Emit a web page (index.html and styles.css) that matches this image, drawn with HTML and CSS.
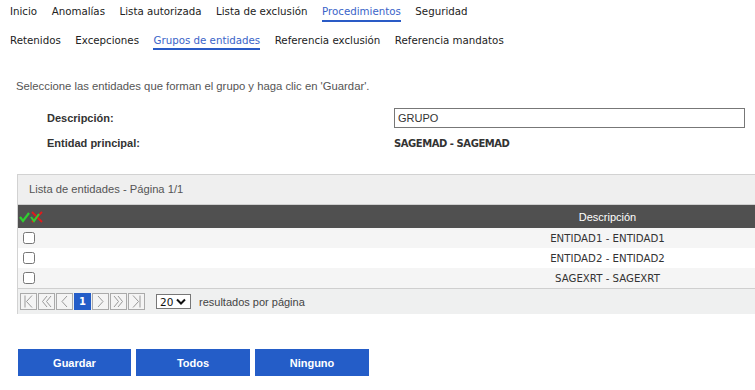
FILE: index.html
```html
<!DOCTYPE html>
<html lang="es">
<head>
  <meta charset="UTF-8">
  <title>Grupos de entidades</title>
  <link rel="stylesheet" href="styles.css">
</head>
<body>

<nav class="menu menu-top">
  <a href="#">Inicio</a>
  <a href="#">Anomalías</a>
  <a href="#">Lista autorizada</a>
  <a href="#">Lista de exclusión</a>
  <a href="#" class="active">Procedimientos</a>
  <a href="#">Seguridad</a>
</nav>

<nav class="menu menu-sub">
  <a href="#">Retenidos</a>
  <a href="#">Excepciones</a>
  <a href="#" class="active">Grupos de entidades</a>
  <a href="#">Referencia exclusión</a>
  <a href="#">Referencia mandatos</a>
</nav>

<p class="intro">Seleccione las entidades que forman el grupo y haga clic en 'Guardar'.</p>

<div class="form-grid">
  <label for="descripcion">Descripción:</label>
  <input type="text" id="descripcion" value="GRUPO">
  <span class="lbl">Entidad principal:</span>
  <span class="value">SAGEMAD - SAGEMAD</span>
</div>

<div class="panel">
  <div class="panel-title">Lista de entidades - Página 1/1</div>
  <table class="grid">
    <thead>
      <tr>
        <th class="col-check">
          <svg width="25" height="12" viewBox="0 0 25 12">
            <polyline points="1,6 4,10 10,2" fill="none" stroke="#2fd02f" stroke-width="2.2"/>
            <line x1="13" y1="1" x2="23" y2="11" stroke="#e01b1b" stroke-width="2"/>
            <line x1="13" y1="11" x2="23" y2="1" stroke="#e01b1b" stroke-width="2"/>
            <polyline points="12,6 15,10 20,3" fill="none" stroke="#2fd02f" stroke-width="2"/>
          </svg>
        </th>
        <th>Descripción</th>
      </tr>
    </thead>
    <tbody>
      <tr><td class="col-check"><input type="checkbox"></td><td>ENTIDAD1 - ENTIDAD1</td></tr>
      <tr><td class="col-check"><input type="checkbox"></td><td>ENTIDAD2 - ENTIDAD2</td></tr>
      <tr><td class="col-check"><input type="checkbox"></td><td>SAGEXRT - SAGEXRT</td></tr>
    </tbody>
  </table>
  <div class="pager">
    <div class="pages">
      <span class="pg">
        <svg width="11" height="13" viewBox="0 0 11 13"><path d="M2 0.5v12M9 0.5L3.5 6.5L9 12.5" fill="none" stroke="#999" stroke-width="1"/></svg>
      </span>
      <span class="pg">
        <svg width="11" height="13" viewBox="0 0 11 13"><path d="M6 1L1.5 6.5L6 12M10 1L5.5 6.5L10 12" fill="none" stroke="#999" stroke-width="1"/></svg>
      </span>
      <span class="pg">
        <svg width="11" height="13" viewBox="0 0 11 13"><path d="M8 1L3 6.5L8 12" fill="none" stroke="#999" stroke-width="1"/></svg>
      </span>
      <span class="pg current">1</span>
      <span class="pg">
        <svg width="11" height="13" viewBox="0 0 11 13"><path d="M3 1L8 6.5L3 12" fill="none" stroke="#999" stroke-width="1"/></svg>
      </span>
      <span class="pg">
        <svg width="11" height="13" viewBox="0 0 11 13"><path d="M1 1L5.5 6.5L1 12M5 1L9.5 6.5L5 12" fill="none" stroke="#999" stroke-width="1"/></svg>
      </span>
      <span class="pg">
        <svg width="11" height="13" viewBox="0 0 11 13"><path d="M2 0.5L7.5 6.5L2 12.5M9 0.5v12" fill="none" stroke="#999" stroke-width="1"/></svg>
      </span>
    </div>
    <div class="page-size">
      <span>20</span>
      <svg width="10" height="7" viewBox="0 0 10 7"><path d="M1 1.5L5 5.5L9 1.5" fill="none" stroke="#111" stroke-width="2"/></svg>
    </div>
    <span class="per-page">resultados por página</span>
  </div>
</div>

<div class="actions">
  <button type="button">Guardar</button>
  <button type="button">Todos</button>
  <button type="button">Ninguno</button>
</div>

</body>
</html>
```

FILE: styles.css
```css
body {
  margin: 0;
  background: #fff;
  font-family: "Liberation Sans", Arial, sans-serif;
  font-size: 11px;
  color: #333;
}
.menu {
  display: flex;
  gap: 14.5px;
  padding-left: 10px;
  font-family: "DejaVu Sans", Verdana, sans-serif;
  font-size: 10.25px;
}
.menu a {
  color: #222;
  text-decoration: none;
  line-height: 13px;
  padding-bottom: 2px;
  border-bottom: 2px solid transparent;
}
.menu a.active {
  color: #3a63c8;
  border-bottom-color: #2a5bc6;
}
.menu-top {
  padding-top: 5px;
}
.menu-sub {
  margin-top: 12px;
}
.menu-sub a {
  padding-bottom: 1px;
}
.intro {
  margin: 29px 0 0 16px;
  line-height: 14px;
  font-size: 11.3px;
  color: #555;
}
.form-grid {
  display: grid;
  grid-template-columns: 347px 351px;
  grid-auto-rows: 20px;
  row-gap: 5px;
  align-items: center;
  margin: 15px 0 0 47px;
}
.form-grid label,
.form-grid .lbl {
  font-weight: bold;
  color: #333;
}
.form-grid input {
  box-sizing: border-box;
  height: 20px;
  width: 100%;
  margin: 0;
  padding: 0 3px;
  border: 1px solid #777;
  font-family: "Liberation Sans", Arial, sans-serif;
  font-size: 11px;
  color: #333;
  outline: none;
}
.form-grid .value {
  font-family: "DejaVu Sans", Verdana, sans-serif;
  font-weight: bold;
  font-size: 10px;
  letter-spacing: -0.45px;
  color: #333;
}
.panel {
  margin: 21px 0 0 17px;
  border-top: 1px solid #d2d2d2;
  border-left: 1px solid #d2d2d2;
}
.panel-title {
  height: 29px;
  line-height: 29px;
  padding-left: 11px;
  background: #efefef;
  border-bottom: 1px solid #cfcfcf;
  font-size: 11.2px;
  color: #555;
}
.grid {
  width: 100%;
  border-collapse: collapse;
}
.grid th {
  height: 23px;
  padding: 0;
  background: #505050;
  color: #fff;
  font-weight: normal;
  text-align: center;
}
.grid th.col-check {
  text-align: left;
  padding-left: 1px;
}
.grid th svg {
  display: block;
}
.grid td {
  height: 20px;
  padding: 0;
  text-align: center;
  font-family: "DejaVu Sans", Verdana, sans-serif;
  font-size: 10.2px;
  color: #333;
}
.grid .col-check {
  width: 441px;
}
.grid td.col-check {
  text-align: left;
}
.grid td input {
  display: block;
  margin: 0 0 0 5px;
  width: 12px;
  height: 12px;
}
.grid tbody tr:nth-child(odd) {
  background: #f5f5f5;
}
.grid tbody tr:last-child td {
  border-bottom: 1px solid #cfcfcf;
}
.pager {
  display: flex;
  align-items: center;
  height: 25px;
  padding-left: 2px;
  background: #eff0f0;
}
.pages {
  display: flex;
  gap: 1px;
}
.pg {
  box-sizing: border-box;
  width: 17px;
  height: 17px;
  display: flex;
  align-items: center;
  justify-content: center;
  border: 1px solid #aaa;
  background: #f4f4f4;
}
.pg.current {
  background: #245dc8;
  border-color: #245dc8;
  color: #fff;
  font-family: "DejaVu Sans", Verdana, sans-serif;
  font-weight: bold;
  font-size: 10px;
}
.page-size {
  box-sizing: border-box;
  display: flex;
  align-items: center;
  gap: 3px;
  height: 15px;
  width: 35px;
  margin-left: 11px;
  padding-left: 3px;
  border: 1px solid #777;
  background: #fff;
  color: #111;
  font-family: "DejaVu Sans", Verdana, sans-serif;
  font-size: 10.5px;
}
.per-page {
  margin-left: 8px;
  color: #444;
}
.actions {
  display: flex;
  gap: 5px;
  margin: 35px 0 0 18px;
}
.actions button {
  width: 114px;
  height: 27px;
  border: none;
  background: #245dc8;
  color: #fff;
  font-family: "Liberation Sans", Arial, sans-serif;
  font-size: 11px;
  font-weight: bold;
  cursor: pointer;
}
.actions button:first-child {
  width: 113px;
}
```
